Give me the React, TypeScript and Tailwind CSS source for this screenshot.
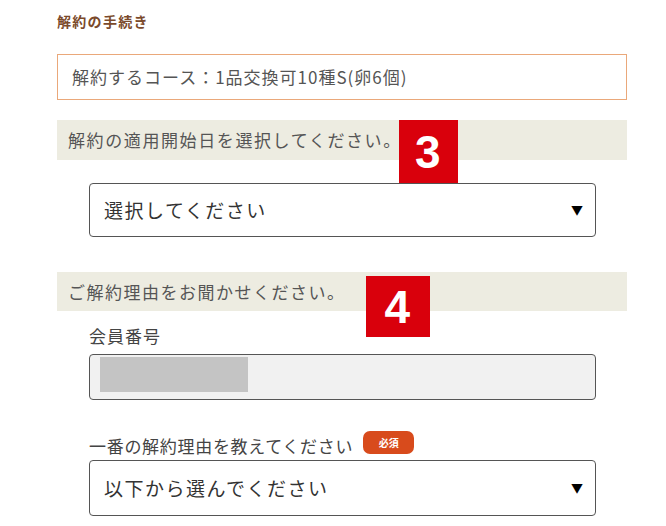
const jp = { fontFamily: '"Noto Sans CJK JP", "Noto Sans", sans-serif' }

function Marker ({ n, className }: { n: string, className: string }) {
	return (
		<div
			className={`absolute flex items-center justify-center bg-[#d9000c] text-white font-bold text-[46px] leading-none ${className}`}
			style={{ fontFamily: '"Liberation Sans", Arial, sans-serif' }}
		>
			{n}
		</div>
	)
}

function SelectBox ({ label, className }: { label: string, className: string }) {
	return (
		<div className={`ml-8 w-[507px] flex items-center justify-between border-[1.5px] border-[#555] rounded-[4px] bg-white pl-[14px] pr-[12px] ${className}`}>
			<span className="text-[19px] tracking-[1.5px] text-[#333]">{label}</span>
			<span className="text-[12px] text-black">{'▼'}</span>
		</div>
	)
}

export default function App () {
	return (
		<div className="w-[666px] h-[526px] bg-white overflow-hidden" style={jp}>
			<div className="pl-[57px] pr-[39px] pt-[11px] flex flex-col">
				<h1 className="text-[14px] leading-[20px] font-bold tracking-[1.3px] text-[#7b4a2b]">
					{'解約の手続き'}
				</h1>

				<div className="mt-[23px] h-[46px] border border-[#eaa87a] flex items-center pl-[14px] text-[17px] tracking-[1px] text-[#555]">
					{'解約するコース：1品交換可10種S(卵6個)'}
				</div>

				<div className="relative mt-[20px] h-[40px] bg-[#edece1] flex items-center pl-[11px] text-[17px] tracking-[1.6px] text-[#555]">
					{'解約の適用開始日を選択してください。'}
					<Marker n="3" className="left-[342px] top-0 w-[59px] h-[63px] z-10" />
				</div>

				<SelectBox label="選択してください" className="mt-[23px] h-[54px]" />

				<div className="relative mt-[35px] h-[39px] bg-[#edece1] flex items-center pl-[11px] text-[17px] tracking-[1.5px] text-[#555]">
					{'ご解約理由をお聞かせください。'}
					<Marker n="4" className="left-[309px] top-[4px] w-[64px] h-[61px] z-10" />
				</div>

				<div className="ml-8 mt-[14px] text-[17px] leading-[22px] tracking-[1px] text-[#444]">
					{'会員番号'}
				</div>

				<div className="ml-8 mt-[7px] w-[507px] h-[46px] border-[1.5px] border-[#555] rounded-[4px] bg-[#f1f1f1] pl-[10px] pt-[2px] pb-[7px] flex">
					<div className="w-[148px] h-full bg-[#c4c4c4]" />
				</div>

				<div className="ml-8 mt-[30px] h-[26px] flex items-end gap-[10px]">
					<span className="text-[17px] leading-[20px] tracking-[0.7px] text-[#444]">
						{'一番の解約理由を教えてください'}
					</span>
					<span className="mb-[2px] w-[51px] h-[23px] rounded-[7px] bg-[#d84b1c] text-white text-[10px] leading-none font-bold flex items-center justify-center">
						{'必須'}
					</span>
				</div>

				<SelectBox label="以下から選んでください" className="mt-[4px] h-[56px]" />
			</div>
		</div>
	)
}
